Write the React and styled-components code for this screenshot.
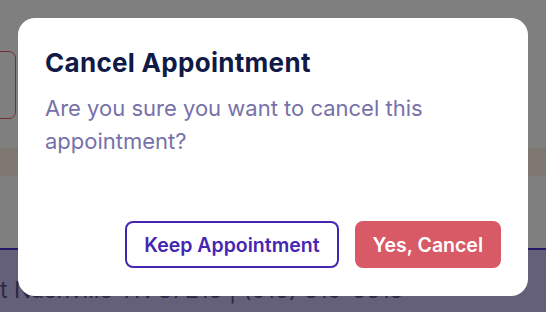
import React from "react";
import styled, { createGlobalStyle } from "styled-components";

const Global = createGlobalStyle`
  html, body { margin: 0; padding: 0; }
  body { font-family: Inter, "Noto Sans", sans-serif; background: #fff; }
  * { box-sizing: border-box; }
`;

const Page = styled.div`
  width: 546px;
  height: 312px;
  overflow: hidden;
  display: flex;
  flex-direction: column;
  background: #ffffff;
`;

const TopArea = styled.div`
  height: 148px;
  display: flex;
  align-items: flex-start;
`;

const OutlinedCard = styled.div`
  width: 120px;
  height: 68px;
  margin-top: 51px;
  margin-left: -104px;
  border: 1.5px solid #f2566c;
  border-radius: 7px;
  flex: none;
`;

const Band = styled.div`
  height: 28px;
  background: #fff0e2;
`;

const Middle = styled.div`
  height: 74px;
  border-bottom: 2px solid #4a2ed4;
`;

const Footer = styled.div`
  flex: 1;
  background: #cac0f4;
  padding: 28px 0 0 0;
  font-size: 23px;
  line-height: 24px;
  color: #57528a;
  white-space: nowrap;
`;

const Overlay = styled.div`
  position: fixed;
  inset: 0;
  background: rgba(0, 0, 0, 0.5);
  display: flex;
  align-items: flex-start;
  justify-content: center;
  padding-top: 18px;
`;

const Modal = styled.div`
  width: 510px;
  height: 278px;
  background: #ffffff;
  border-radius: 17px;
  padding: 30px 27px 28px 27px;
  display: flex;
  flex-direction: column;
`;

const Title = styled.h2`
  margin: 0;
  font-size: 26px;
  line-height: 30px;
  font-weight: 700;
  color: #101a47;
  letter-spacing: 0.3px;
`;

const Body = styled.p`
  margin: 14px 0 0 0;
  font-size: 22px;
  line-height: 33px;
  font-weight: 400;
  color: #7771a9;
`;

const Actions = styled.div`
  margin-top: auto;
  display: flex;
  justify-content: flex-end;
  gap: 16px;
`;

const Button = styled.button`
  height: 47px;
  padding: 0 ${(p) => (p.$primary ? "16px" : "17px")};
  border-radius: 8px;
  font-family: Inter, "Noto Sans", sans-serif;
  font-size: 19.5px;
  font-weight: 600;
  cursor: pointer;
  border: 2px solid ${(p) => (p.$primary ? "#d95a67" : "#4526b3")};
  background: ${(p) => (p.$primary ? "#d95a67" : "#ffffff")};
  color: ${(p) => (p.$primary ? "#ffffff" : "#4526b3")};
`;

export default function App() {
  return (
    <>
      <Global />
      <Page>
        <TopArea>
          <OutlinedCard />
        </TopArea>
        <Band />
        <Middle />
        <Footer>t Nashville TN 37215 | (615) 319-5515</Footer>
      </Page>
      <Overlay>
        <Modal role="dialog" aria-modal="true">
          <Title>Cancel Appointment</Title>
          <Body>Are you sure you want to cancel this appointment?</Body>
          <Actions>
            <Button>Keep Appointment</Button>
            <Button $primary>Yes, Cancel</Button>
          </Actions>
        </Modal>
      </Overlay>
    </>
  );
}
